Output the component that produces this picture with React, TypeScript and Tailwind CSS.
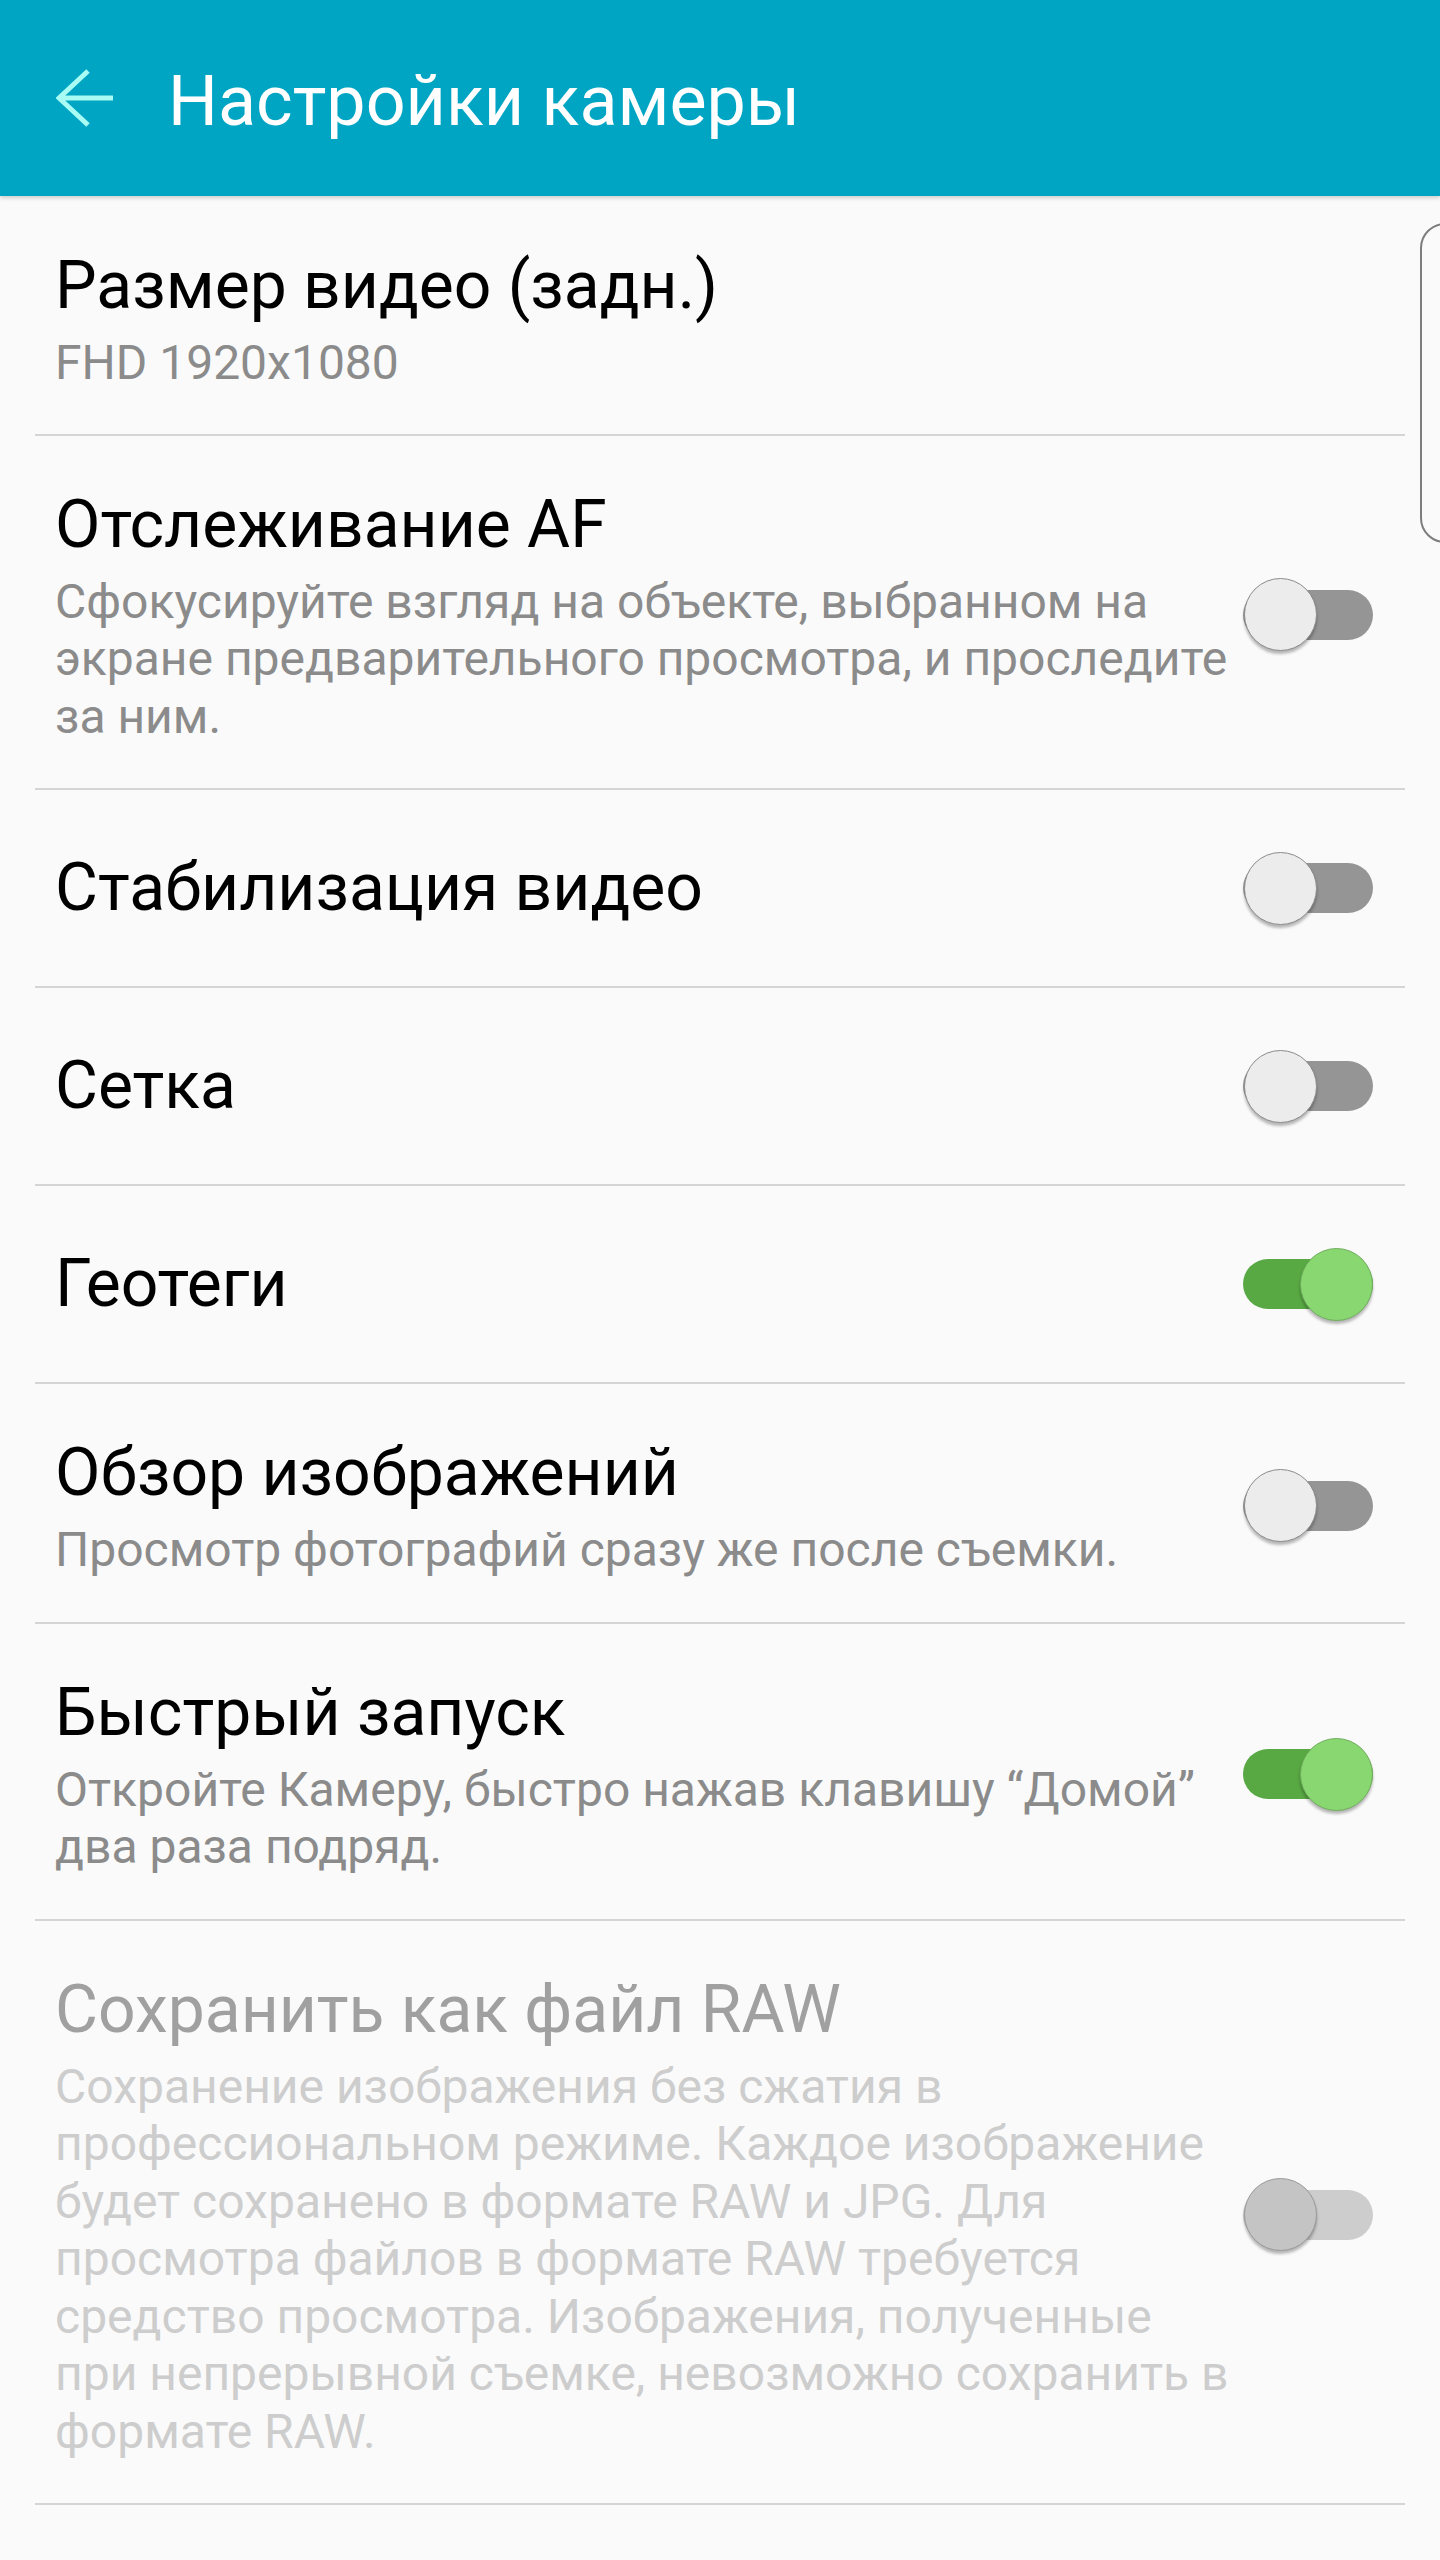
import React from "react";

type TState = "off" | "on" | "disabled";

function Toggle({ state }: { state: TState }) {
  const track =
    state === "on" ? "bg-[#58a843]" : state === "off" ? "bg-[#959595]" : "bg-[#cdcdcd]";
  const thumb =
    state === "on"
      ? "left-[57px] bg-[#89d771] border-[#6fae5c]"
      : state === "off"
      ? "left-[1px] bg-[#ececec] border-[#8c8c8c]"
      : "left-[1px] bg-[#c4c4c4] border-[#9a9a9a]";
  return (
    <div className="relative w-[130px] h-[75px] flex items-center shrink-0">
      <div className={`w-full h-[50px] rounded-full ${track}`} />
      <div
        className={`absolute top-[1px] w-[73px] h-[73px] rounded-full border ${thumb} shadow-[0_3px_3px_rgba(0,0,0,0.28)]`}
      />
    </div>
  );
}

type Row = {
  title: string;
  desc?: string[];
  toggle?: TState;
  disabled?: boolean;
  first?: boolean;
};

const rows: Row[] = [
  { title: "Размер видео (задн.)", desc: ["FHD 1920x1080"], first: true },
  {
    title: "Отслеживание AF",
    desc: [
      "Сфокусируйте взгляд на объекте, выбранном на",
      "экране предварительного просмотра, и проследите",
      "за ним.",
    ],
    toggle: "off",
  },
  { title: "Стабилизация видео", toggle: "off" },
  { title: "Сетка", toggle: "off" },
  { title: "Геотеги", toggle: "on" },
  {
    title: "Обзор изображений",
    desc: ["Просмотр фотографий сразу же после съемки."],
    toggle: "off",
  },
  {
    title: "Быстрый запуск",
    desc: ["Откройте Камеру, быстро нажав клавишу “Домой”", "два раза подряд."],
    toggle: "on",
  },
  {
    title: "Сохранить как файл RAW",
    desc: [
      "Сохранение изображения без сжатия в",
      "профессиональном режиме. Каждое изображение",
      "будет сохранено в формате RAW и JPG. Для",
      "просмотра файлов в формате RAW требуется",
      "средство просмотра. Изображения, полученные",
      "при непрерывной съемке, невозможно сохранить в",
      "формате RAW.",
    ],
    toggle: "disabled",
    disabled: true,
  },
];

function SettingRow({ row }: { row: Row }) {
  const multi = !!row.desc;
  const pad = multi
    ? row.first
      ? "pt-[50px] pb-[42px]"
      : "pt-[49px] pb-[43px]"
    : "h-[198px]";
  return (
    <div
      className={`mx-[35px] border-b-2 border-[#d5d5d5] flex items-center pl-[20px] pr-[32px] ${pad}`}
    >
      <div className="flex-1 min-w-0">
        <div
          className={`text-[66px] leading-[80px] whitespace-nowrap ${
            row.disabled ? "text-[#a0a0a0]" : "text-black"
          }`}
        >
          {row.title}
        </div>
        {row.desc && (
          <div
            className={`mt-[8px] text-[48px] leading-[57.5px] ${
              row.disabled ? "text-[#cdcdcd]" : "text-[#8b8b8b]"
            }`}
          >
            {row.desc.map((l, i) => (
              <div key={i} className="whitespace-nowrap">
                {l}
              </div>
            ))}
          </div>
        )}
      </div>
      {row.toggle && <Toggle state={row.toggle} />}
    </div>
  );
}

export default function App() {
  return (
    <div
      className="relative w-[1440px] min-h-[2560px] bg-[#fafafa] overflow-hidden"
      style={{ fontFamily: "Roboto, 'Noto Sans', sans-serif" }}
    >
      <header className="relative z-10 h-[196px] bg-[#00a5c3] flex items-center pl-[56px] shadow-[0_2px_4px_rgba(0,0,0,0.18)]">
        <svg width="58" height="58" viewBox="0 0 58 58" className="shrink-0">
          <path
            d="M32 2 L3 29 L32 56 M3 29 L57 29"
            fill="none"
            stroke="#a9fcf4"
            strokeWidth="5"
            strokeLinejoin="miter"
          />
        </svg>
        <div className="ml-[54px] pt-[6px] text-[70px] leading-none text-white whitespace-nowrap">
          Настройки камеры
        </div>
      </header>

      <main>
        {rows.map((r, i) => (
          <SettingRow key={i} row={r} />
        ))}
      </main>

      <div className="absolute left-[1420px] top-[223px] w-[50px] h-[320px] rounded-[26px] border-2 border-[#7d7d7d]" />
    </div>
  );
}
